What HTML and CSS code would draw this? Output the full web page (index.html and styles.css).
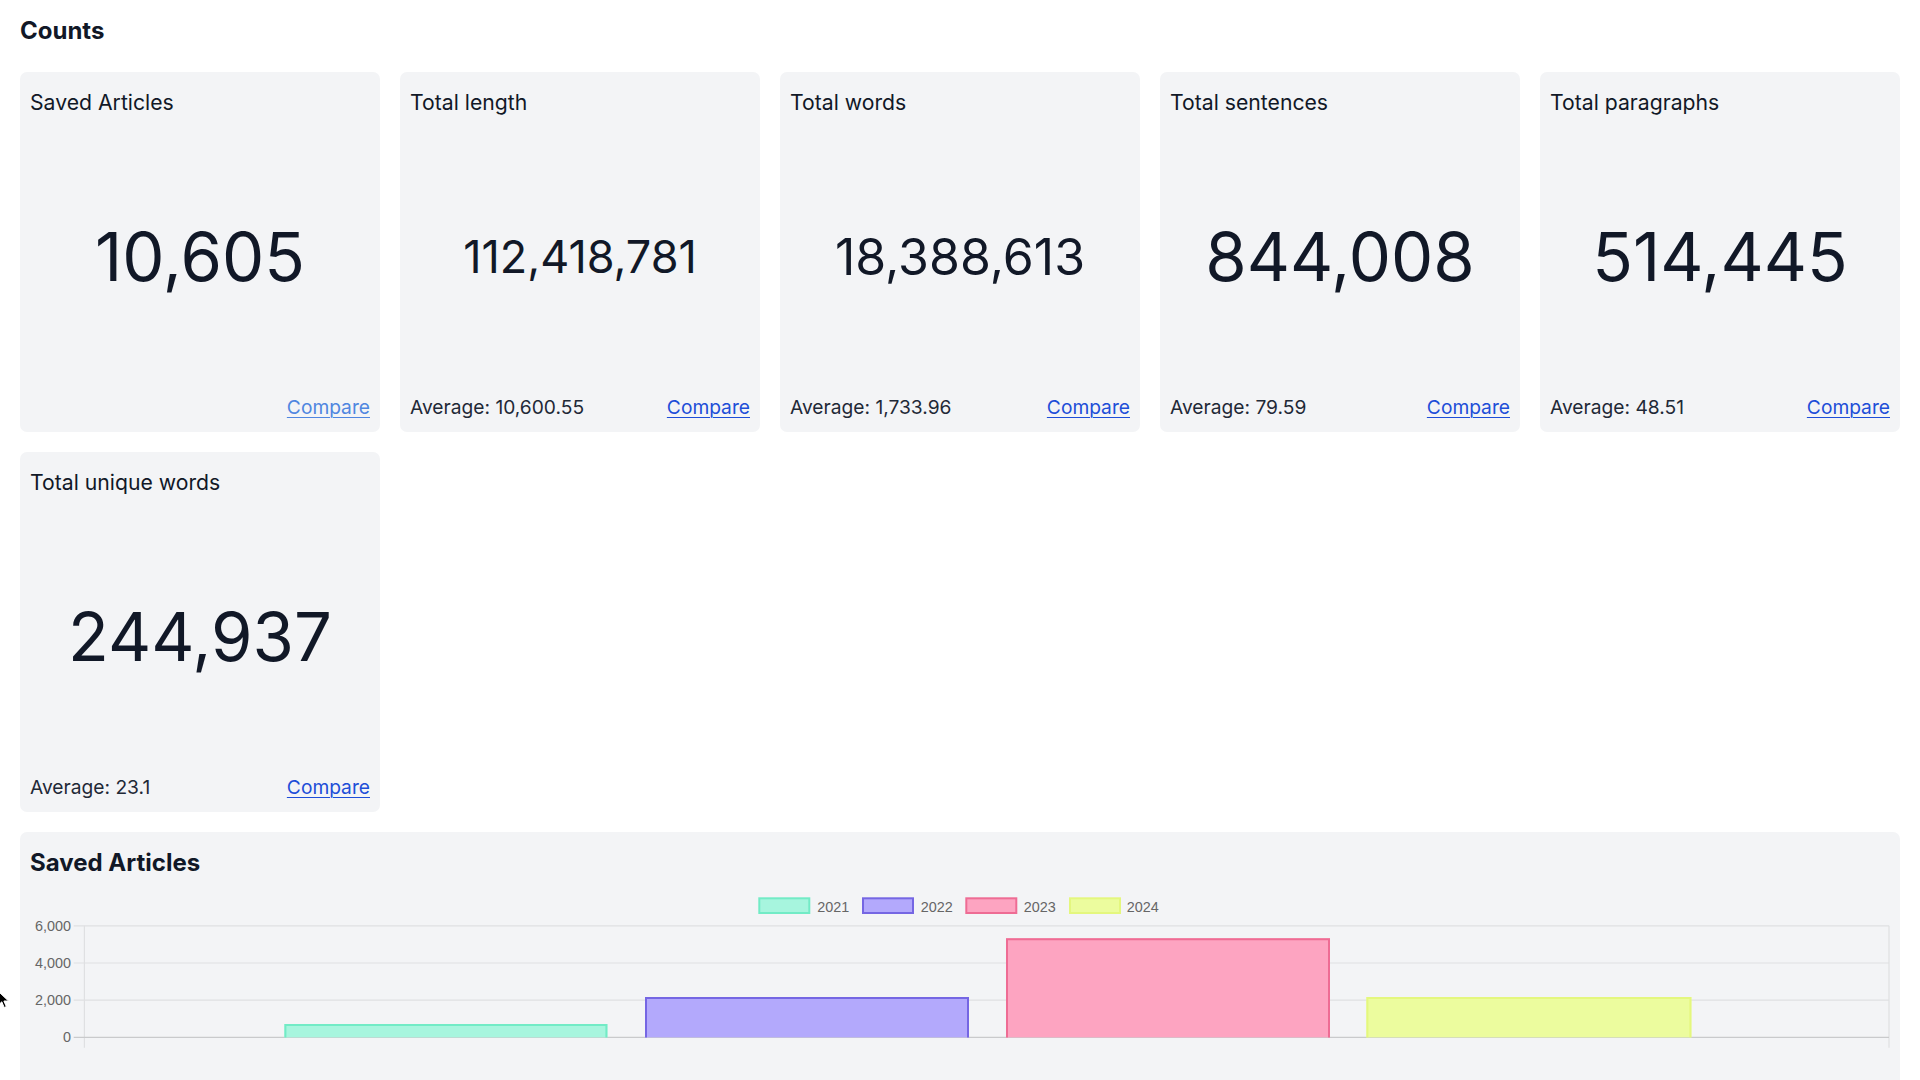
FILE: index.html
```html
<!DOCTYPE html>
<html lang="en">
<head>
<meta charset="utf-8">
<title>Counts</title>
<link rel="stylesheet" href="styles.css">
</head>
<body>
<main class="page">
  <h2 class="page-title">Counts</h2>
  <section class="cards">
    <div class="card">
      <div class="card-title">Saved Articles</div>
      <div class="card-value value-xl">10,605</div>
      <div class="card-footer"><a class="compare compare-active" href="#">Compare</a></div>
    </div>
    <div class="card">
      <div class="card-title">Total length</div>
      <div class="card-value value-s">112,418,781</div>
      <div class="card-footer"><span class="avg">Average: 10,600.55</span><a class="compare" href="#">Compare</a></div>
    </div>
    <div class="card">
      <div class="card-title">Total words</div>
      <div class="card-value value-m">18,388,613</div>
      <div class="card-footer"><span class="avg">Average: 1,733.96</span><a class="compare" href="#">Compare</a></div>
    </div>
    <div class="card">
      <div class="card-title">Total sentences</div>
      <div class="card-value value-xl">844,008</div>
      <div class="card-footer"><span class="avg">Average: 79.59</span><a class="compare" href="#">Compare</a></div>
    </div>
    <div class="card">
      <div class="card-title">Total paragraphs</div>
      <div class="card-value value-xl">514,445</div>
      <div class="card-footer"><span class="avg">Average: 48.51</span><a class="compare" href="#">Compare</a></div>
    </div>
    <div class="card">
      <div class="card-title">Total unique words</div>
      <div class="card-value value-xl">244,937</div>
      <div class="card-footer"><span class="avg">Average: 23.1</span><a class="compare" href="#">Compare</a></div>
    </div>
  </section>

  <section class="panel">
    <h3 class="panel-title">Saved Articles</h3>
    <svg class="chart" viewBox="0 0 1860 230" width="1860" height="230">
      <g class="legend">
        <rect x="729.3" y="20.3" width="50" height="14.7" fill="#a7f5de" stroke="#72ebc6" stroke-width="2"/>
        <text x="787.3" y="33.6">2021</text>
        <rect x="833" y="20.3" width="50" height="14.7" fill="#b3a9fc" stroke="#7566e3" stroke-width="2"/>
        <text x="890.7" y="33.6">2022</text>
        <rect x="936.3" y="20.3" width="50" height="14.7" fill="#fda4c1" stroke="#ee6c94" stroke-width="2"/>
        <text x="993.7" y="33.6">2023</text>
        <rect x="1040" y="20.3" width="50" height="14.7" fill="#ecfc9e" stroke="#e4f77e" stroke-width="2"/>
        <text x="1096.7" y="33.6">2024</text>
      </g>
      <g class="grid">
        <line x1="43.7" y1="47.8" x2="1859" y2="47.8"/>
        <line x1="43.7" y1="85" x2="1859" y2="85"/>
        <line x1="43.7" y1="122.2" x2="1859" y2="122.2"/>
        <line x1="54.4" y1="47.8" x2="54.4" y2="169.7"/>
        <line x1="1859" y1="47.8" x2="1859" y2="169.7"/>
      </g>
      <line class="axis" x1="43.7" y1="159.4" x2="1859" y2="159.4"/>
      <g class="ylabels">
        <text x="41" y="52.8">6,000</text>
        <text x="41" y="90">4,000</text>
        <text x="41" y="127.2">2,000</text>
        <text x="41" y="164.4">0</text>
      </g>
      <rect x="254.4" y="146" width="323" height="13.4" fill="#a7f5de"/>
      <polyline points="255.4,159.4 255.4,147 576.4,147 576.4,159.4" fill="none" stroke="#72ebc6" stroke-width="2"/>
      <rect x="615" y="119" width="324" height="40.4" fill="#b3a9fc"/>
      <polyline points="616,159.4 616,120 938,120 938,159.4" fill="none" stroke="#7566e3" stroke-width="2"/>
      <rect x="976" y="60.3" width="324" height="99.1" fill="#fda4c1"/>
      <polyline points="977,159.4 977,61.3 1299,61.3 1299,159.4" fill="none" stroke="#ee6c94" stroke-width="2"/>
      <rect x="1336.4" y="119" width="325" height="40.4" fill="#ecfc9e"/>
      <polyline points="1337.4,159.4 1337.4,120 1660.4,120 1660.4,159.4" fill="none" stroke="#e4f77e" stroke-width="2"/>
    </svg>
  </section>
</main>
<svg class="cursor" viewBox="0 0 12 18" width="12" height="18">
  <path d="M0.5 0.5 L0.5 14 L3.8 10.8 L6.2 16.5 L8.3 15.6 L5.9 10 L10.5 10 Z" fill="#000" stroke="#fff" stroke-width="1"/>
</svg>
</body>
</html>
```
FILE: styles.css
```css
html, body {
  margin: 0;
  padding: 0;
  background: #ffffff;
}

body {
  font-family: Inter, "Noto Sans", sans-serif;
  color: #111827;
}

.page {
  padding: 13px 20px 20px 20px;
}

.page-title {
  margin: 0 0 23px 0;
  font-size: 24px;
  line-height: 36px;
  font-weight: 700;
  color: #111827;
}

.cards {
  display: grid;
  grid-template-columns: repeat(5, 360px);
  gap: 20px;
}

.card {
  height: 360px;
  box-sizing: border-box;
  background: #f3f4f6;
  border-radius: 7px;
  padding: 14px 10px 10px 10px;
  display: flex;
  flex-direction: column;
}

.card-title {
  font-size: 21.2px;
  line-height: 32px;
  color: #111827;
}

.card-value {
  flex: 1;
  display: flex;
  align-items: center;
  justify-content: center;
  color: #111827;
  line-height: 1;
  padding-top: 1px;
}

.value-xl {
  font-size: 67px;
}

.value-m {
  font-size: 50px;
}

.value-s {
  font-size: 45px;
}

.card-footer {
  display: flex;
  justify-content: space-between;
  align-items: baseline;
  font-size: 19.2px;
  line-height: 26px;
  padding-bottom: 2px;
}

.avg {
  color: #1f2937;
}

.compare {
  margin-left: auto;
  color: #1d4ed8;
  text-decoration: underline;
  text-underline-offset: 3px;
  text-decoration-thickness: 1px;
}

.compare-active {
  color: #4f86e0;
}

.panel {
  margin-top: 20px;
  background: #f3f4f6;
  border-radius: 7px;
  padding: 16px 10px 10px 10px;
}

.panel-title {
  margin: 0;
  font-size: 24px;
  line-height: 30px;
  font-weight: 700;
  color: #111827;
}

.chart {
  display: block;
  width: 1860px;
  height: 230px;
}

.chart text {
  font-family: "Liberation Sans", Arial, sans-serif;
  font-size: 14.4px;
  fill: #666666;
}

.chart .ylabels text {
  text-anchor: end;
}

.chart .grid line {
  stroke: #dfe0e2;
  stroke-width: 1.2;
}

.chart .axis {
  stroke: #c9cacc;
  stroke-width: 1.2;
}

.cursor {
  position: absolute;
  left: -2px;
  top: 991px;
}
```
